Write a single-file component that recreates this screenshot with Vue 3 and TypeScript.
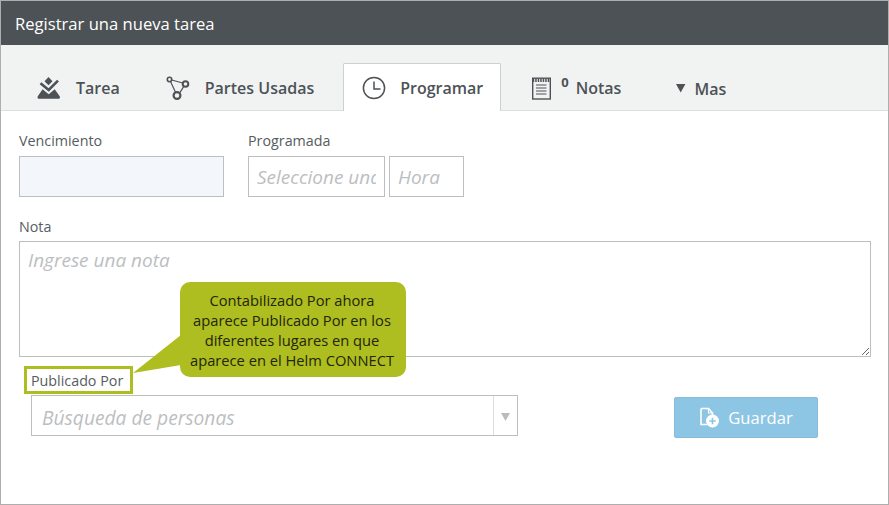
<script setup lang="ts">
const title: string = 'Registrar una nueva tarea'
</script>

<template>
  <div class="frame">
    <header class="head">{{ title }}</header>
    <nav class="tabs">
      <div class="tab">
        <svg class="ico" width="24" height="24" viewBox="0 0 24 24">
          <path d="M11.5 1l4 4.2-4 4-4-4z" fill="#4d5256" />
          <path d="M3.5 7.2l8.2 6.8L21 4.6" fill="none" stroke="#4d5256" stroke-width="2.6" />
          <path d="M5.6 13.2l6.1 5 6-5 5 7c.7 1.4.2 2.6-1.6 2.6H2.4c-1.8 0-2.3-1.2-1.6-2.6z" fill="#4d5256" />
        </svg>
        <span>Tarea</span>
      </div>
      <div class="tab parts">
        <svg class="ico" width="24" height="24" viewBox="0 0 24 24" fill="none" stroke="#4d5256">
          <circle cx="3.5" cy="3.5" r="2.2" stroke-width="1.6" />
          <circle cx="19.5" cy="8" r="2.8" stroke-width="2" />
          <circle cx="11" cy="19.5" r="3.4" stroke-width="2.2" />
          <path d="M5.8 4l10.8 3M4.5 5.6l5 10.6M17.8 10.4l-3.9 6.2" stroke-width="1.2" />
        </svg>
        <span>Partes Usadas</span>
      </div>
      <div class="tab active">
        <svg class="ico" width="24" height="24" viewBox="0 0 24 24" fill="none" stroke="#4d5256" stroke-width="1.5">
          <circle cx="12" cy="12" r="10.6" />
          <path d="M12 5.5V13h6.5" />
        </svg>
        <span>Programar</span>
      </div>
      <div class="tab notes">
        <svg class="ico" width="24" height="24" viewBox="0 0 24 24" fill="none" stroke="#4d5256">
          <rect x="1.7" y="2.2" width="17.6" height="20.8" stroke-width="1.4" />
          <path d="M1.7 4.6h17.6" stroke-width="3" stroke-dasharray="1.5 1" />
          <path d="M5 9h10.5M5 12h10.5M5 15h10.5M5 18h10.5" stroke-width="1.1" />
        </svg>
        <sup class="count">0</sup>
        <span>Notas</span>
      </div>
      <div class="tab more">
        <svg class="caret" width="10" height="9" viewBox="0 0 10 9"><path d="M0 0h9.4L4.7 8.4z" fill="#4d5256" /></svg>
        <span>Mas</span>
      </div>
    </nav>

    <main class="body">
      <div class="dates">
        <div class="field due">
          <label>Vencimiento</label>
          <input class="input tinted" type="text" />
        </div>
        <div class="field">
          <label>Programada</label>
          <div class="pair">
            <input class="input date" type="text" placeholder="Seleccione una fecha" />
            <input class="input time" type="text" placeholder="Hora" />
          </div>
        </div>
      </div>

      <div class="field note">
        <label>Nota</label>
        <textarea class="input area" placeholder="Ingrese una nota"></textarea>
      </div>

      <div class="lower">
        <div class="publisher">
          <div class="marked"><label>Publicado Por</label></div>
          <div class="select">
            <span class="ph">Búsqueda de personas</span>
            <span class="arrow">
              <svg width="9" height="8" viewBox="0 0 9 8"><path d="M0 0h9L4.5 8z" fill="#b9bcbe" /></svg>
            </span>
          </div>
        </div>
        <button class="save" type="button">
          <svg width="21" height="21" viewBox="0 0 21 21">
            <path d="M2 1.5h7.5l4 4.5v3.5M2 1.5v16h6" fill="none" stroke="#fff" stroke-width="1.6" />
            <path d="M9.5 1.5v4.5h4" fill="none" stroke="#fff" stroke-width="1.2" />
            <circle cx="13.5" cy="14" r="6.5" fill="#fff" />
            <path d="M13.5 10.8v6.4M10.3 14h6.4" stroke="#8dc6e4" stroke-width="1.6" />
          </svg>
          <span>Guardar</span>
        </button>
      </div>

      <div class="callout">
        Contabilizado Por ahora<br />aparece Publicado Por en los<br />diferentes lugares en que<br />aparece en el Helm CONNECT
      </div>
      <svg class="pointer" width="49" height="40" viewBox="0 0 49 40"><path d="M48 0L0 38l48-8z" fill="#aebd1f" /></svg>
    </main>
  </div>
</template>

<style>
html, body { margin: 0; background: #fff; }
</style>

<style scoped>
.frame {
  box-sizing: border-box;
  width: 889px;
  height: 505px;
  border: 1px solid #aeaeae;
  font-family: "Open Sans", sans-serif;
  color: #4d5256;
  background: #fff;
  overflow: hidden;
}
.head {
  height: 44px;
  line-height: 45px;
  background: #4d5256;
  color: #fff;
  font-size: 16.6px;
  padding-left: 14px;
}
.tabs {
  box-sizing: border-box;
  height: 66px;
  padding: 18px 0 0 17px;
  background: #f1f3f3;
  border-bottom: 1px solid #dcdedf;
  display: flex;
  gap: 9px;
}
.tab {
  box-sizing: border-box;
  height: 48px;
  padding: 0 18px;
  display: flex;
  align-items: center;
  font-size: 16px;
  font-weight: 600;
  border: 1px solid transparent;
  border-bottom: 0;
}
.tab span { line-height: 1; }
.active {
  background: #fff;
  border-color: #cdcfd0;
  border-radius: 2px 2px 0 0;
  padding-right: 17px;
}
.active .ico { margin-right: 14px; }
.ico { margin-right: 15px; flex: none; }
.parts { padding-left: 17px; padding-right: 19px; }
.notes { padding-left: 20px; padding-right: 17px; }
.count {
  font-size: 13px;
  font-weight: 700;
  margin: -10px 7px 0 -9px;
  line-height: 1;
}
.more { padding-left: 27px; padding-top: 2px; }
.caret { margin-right: 8px; }
.body {
  position: relative;
  padding: 20px 17px 0 18px;
}
.dates { display: flex; gap: 24px; }
.field label, .marked label {
  display: block;
  font-size: 14.3px;
  line-height: 19px;
  color: #575c60;
}
.field label { margin-bottom: 6px; }
.due { width: 205px; }
.pair { display: flex; gap: 4px; }
.input {
  box-sizing: border-box;
  display: block;
  height: 41px;
  border: 1px solid #bcbebf;
  border-radius: 0;
  background: #fff;
  font-family: inherit;
  font-size: 19px;
  padding: 0 8px;
  margin: 0;
  outline: none;
}
.input::placeholder { color: #bcbebf; font-style: italic; opacity: 1; }
.tinted { width: 205px; background: #f3f6fb; }
.date { width: 137px; }
.time { width: 75px; }
.note { margin-top: 20px; }
.note label { margin-bottom: 5px; }
.area {
  width: 852px;
  height: 116px;
  padding: 5px 8px;
  resize: vertical;
}
.lower {
  display: flex;
  align-items: flex-start;
  margin-top: 9px;
}
.publisher { margin-left: 5px; }
.marked {
  box-sizing: border-box;
  width: 109px;
  height: 28px;
  border: 3px solid #aebd1f;
  padding: 2px 0 0 4px;
}
.marked label { white-space: nowrap; }
.select {
  box-sizing: border-box;
  width: 487px;
  height: 41px;
  margin: 1px 0 0 7px;
  border: 1px solid #bcbebf;
  display: flex;
  align-items: stretch;
}
.ph {
  flex: 1;
  line-height: 43px;
  padding-left: 10px;
  font-size: 19.2px;
  font-style: italic;
  color: #bcbebf;
}
.arrow {
  width: 23px;
  border-left: 1px solid #dcdedf;
  display: flex;
  align-items: center;
  justify-content: center;
  padding-top: 2px;
}
.save {
  box-sizing: border-box;
  width: 144px;
  height: 41px;
  margin: 31px 0 0 156px;
  display: flex;
  align-items: center;
  justify-content: center;
  gap: 8px;
  background: #8dc6e4;
  border: 1px solid #86bcd9;
  border-radius: 2px;
  color: #fff;
  font-family: inherit;
  font-size: 16.6px;
  font-weight: 500;
  padding: 0;
}
.callout {
  position: absolute;
  left: 179px;
  top: 171px;
  box-sizing: border-box;
  width: 226px;
  height: 95px;
  padding: 8px 2px 8px 0;
  border-radius: 10px;
  background: #aebd1f;
  color: #23260a;
  font-size: 14.7px;
  line-height: 20px;
  text-align: center;
  white-space: nowrap;
}
.pointer {
  position: absolute;
  left: 132px;
  top: 224px;
}
</style>
